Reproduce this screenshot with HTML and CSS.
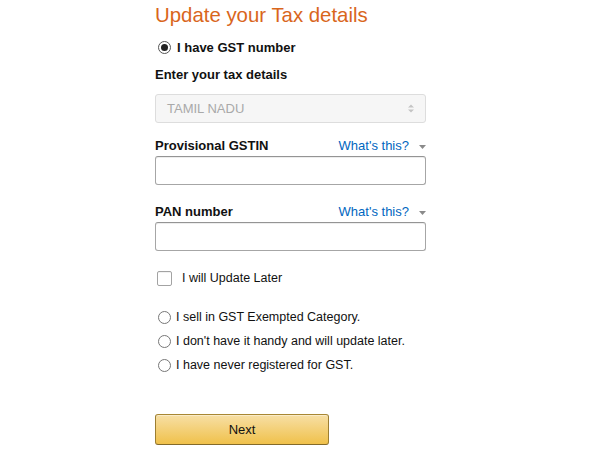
FILE: index.html
```html
<!DOCTYPE html>
<html>
<head>
<meta charset="utf-8">
<link rel="stylesheet" href="styles.css">
</head>
<body>
<div class="page">
  <h1 class="title">Update your Tax details</h1>
  <label class="row gst-row"><span class="radio checked"></span><span class="bold">I have GST number</span></label>
  <div class="bold section-label">Enter your tax details</div>
  <div class="select">
    <span class="select-text">TAMIL NADU</span>
    <svg class="select-arrows" width="6" height="9" viewBox="0 0 6 9"><path d="M0 3.5 L3 0.5 L6 3.5 Z M0 5.5 L3 8.5 L6 5.5 Z" fill="#c4c4c4"/></svg>
  </div>
  <div class="field-head first">
    <span class="bold">Provisional GSTIN</span>
    <span class="help">What's this?<svg class="caret" width="7" height="4" viewBox="0 0 7 4"><path d="M0 0 L7 0 L3.5 4 Z" fill="#8a8a8a"/></svg></span>
  </div>
  <div class="input"></div>
  <div class="field-head second">
    <span class="bold">PAN number</span>
    <span class="help">What's this?<svg class="caret" width="7" height="4" viewBox="0 0 7 4"><path d="M0 0 L7 0 L3.5 4 Z" fill="#8a8a8a"/></svg></span>
  </div>
  <div class="input"></div>
  <label class="row check-row"><span class="checkbox"></span><span>I will Update Later</span></label>
  <div class="options">
    <label class="row opt"><span class="radio"></span><span>I sell in GST Exempted Category.</span></label>
    <label class="row opt"><span class="radio"></span><span>I don't have it handy and will update later.</span></label>
    <label class="row opt"><span class="radio"></span><span>I have never registered for GST.</span></label>
  </div>
  <div class="button">Next</div>
</div>
</body>
</html>
```
FILE: styles.css
```css
html, body {
  margin: 0;
  padding: 0;
  background: #fff;
}
body {
  font-family: "Liberation Sans", Arial, sans-serif;
  color: #111;
  font-size: 12.5px;
}
.page {
  width: 271px;
  margin-left: 155px;
  display: flex;
  flex-direction: column;
}
.title {
  margin: 0;
  padding-top: 3px;
  font-size: 20.4px;
  line-height: 24px;
  font-weight: normal;
  color: #d9661c;
}
.bold {
  font-weight: bold;
  font-size: 13px;
  color: #111;
}
.row {
  display: flex;
  align-items: center;
  height: 17px;
}
.gst-row {
  margin-top: 12px;
  margin-left: 3px;
  gap: 6px;
}
.radio {
  width: 11px;
  height: 11px;
  border: 1px solid #777;
  border-radius: 50%;
  box-sizing: content-box;
  display: flex;
  align-items: center;
  justify-content: center;
  background: #fff;
  flex: none;
}
.radio.checked {
  border-color: #555;
}
.radio.checked::after {
  content: "";
  width: 7px;
  height: 7px;
  border-radius: 50%;
  background: #222;
}
.section-label {
  margin-top: 11px;
  line-height: 16px;
}
.select {
  margin-top: 11px;
  height: 29px;
  box-sizing: border-box;
  border: 1px solid #ddd;
  border-radius: 3px;
  background: #f6f6f6;
  display: flex;
  align-items: center;
  justify-content: space-between;
  padding: 0 11px 0 11px;
}
.select-text {
  color: #a9a9a9;
  font-size: 13px;
}
.field-head {
  display: flex;
  justify-content: space-between;
  align-items: center;
  line-height: 16px;
}
.field-head.first {
  margin-top: 15px;
}
.field-head.second {
  margin-top: 19px;
}
.help {
  color: #0066c0;
  font-size: 13px;
  display: flex;
  align-items: center;
  gap: 10px;
}
.caret {
  margin-top: 1px;
}
.input {
  margin-top: 2px;
  height: 29px;
  box-sizing: border-box;
  border: 1px solid #a6a6a6;
  border-top-color: #949494;
  border-radius: 3px;
  background: #fff;
  box-shadow: 0 1px 0 rgba(255,255,255,.5), 0 1px 0 rgba(0,0,0,.07) inset;
}
.check-row {
  margin-top: 19px;
  margin-left: 2px;
  gap: 10px;
  height: 16px;
}
.checkbox {
  width: 13px;
  height: 13px;
  border: 1px solid #a3a3a3;
  border-radius: 2px;
  background: #fff;
  box-shadow: 0 1px 0 rgba(0,0,0,.05) inset;
}
.options {
  margin-top: 22px;
  display: flex;
  flex-direction: column;
  gap: 6px;
}
.opt {
  height: 18px;
  margin-left: 3px;
  gap: 5px;
}
.button {
  margin-top: 40px;
  width: 174px;
  height: 31px;
  box-sizing: border-box;
  border: 1px solid;
  border-color: #a88734 #9c7e31 #846a29;
  border-radius: 3px;
  background: linear-gradient(to bottom, #f7dfa5, #f0c14b);
  box-shadow: 0 1px 0 rgba(255,255,255,.4) inset;
  display: flex;
  align-items: center;
  justify-content: center;
  font-size: 13px;
  color: #111;
}
```
